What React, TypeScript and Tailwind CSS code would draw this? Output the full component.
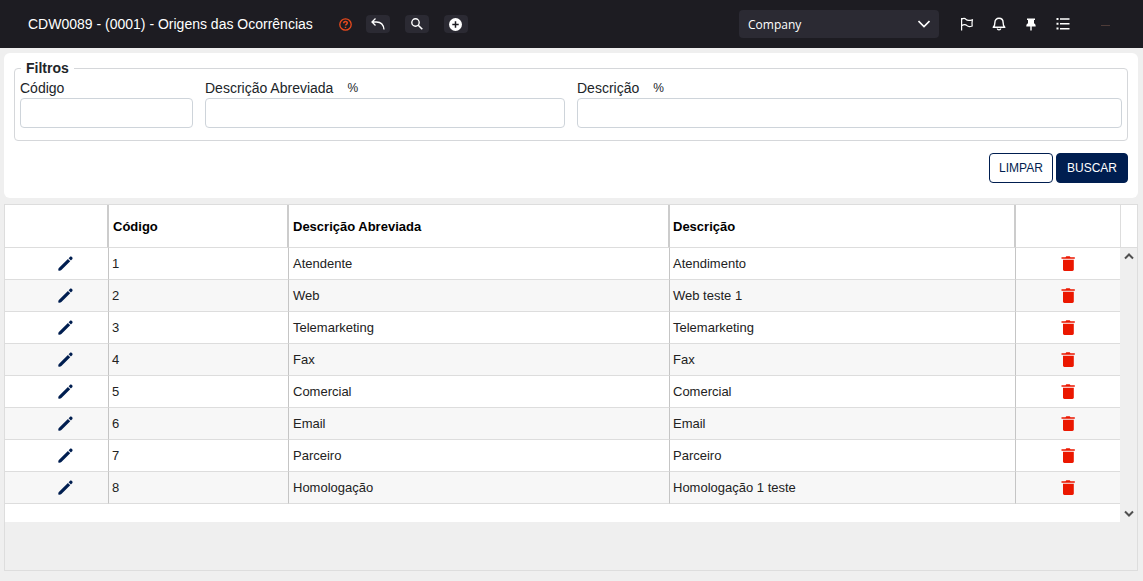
import { ReactNode } from 'react';

// Types
type Origin = {
    id: number,
    short: string,
    description: string,
};

const origins: Origin[] = [
    { id: 1, short: 'Atendente', description: 'Atendimento' },
    { id: 2, short: 'Web', description: 'Web teste 1' },
    { id: 3, short: 'Telemarketing', description: 'Telemarketing' },
    { id: 4, short: 'Fax', description: 'Fax' },
    { id: 5, short: 'Comercial', description: 'Comercial' },
    { id: 6, short: 'Email', description: 'Email' },
    { id: 7, short: 'Parceiro', description: 'Parceiro' },
    { id: 8, short: 'Homologação', description: 'Homologação 1 teste' },
];

const ToolButton = ({ label, children }: { label: string, children: ReactNode }) => (
    <button type="button" aria-label={label} className="flex h-[18px] w-6 items-center justify-center rounded-sm bg-[#2b2a33] text-white">
        {children}
    </button>
);

const PlainButton = ({ label, children }: { label: string, children: ReactNode }) => (
    <button type="button" aria-label={label} className="flex h-4 w-4 items-center justify-center text-white">
        {children}
    </button>
);

const Header = () => (
    <header className="flex h-12 items-center bg-[#1d1c22] pl-7 pr-[30px] text-white">
        <h1 className="text-[14px] leading-5">CDW0089 - (0001) - Origens das Ocorrências</h1>
        <button type="button" aria-label="Ajuda" className="ml-[26px] text-[#e8491d]">
            <svg width="13" height="13" viewBox="0 0 13 13" fill="none" stroke="currentColor" strokeWidth="1.3">
                <circle cx="6.5" cy="6.5" r="5.7" />
                <path d="M4.7 5.2C4.7 2.8 8.3 2.9 8.3 5c0 1.3-1.8 1.3-1.8 2.6M6.5 8.8v1.2" strokeWidth="1.5" />
            </svg>
        </button>
        <div className="ml-[14px] flex gap-[15px]">
            <ToolButton label="Voltar">
                <svg width="14" height="12" viewBox="0 0 14 12" fill="none" stroke="currentColor" strokeWidth="1.3">
                    <path d="M4.5 0.5L1 4l3.5 3.5M1 4h4.5c4.500 0 7 2.500 7.500 7.500" />
                </svg>
            </ToolButton>
            <ToolButton label="Pesquisar">
                <svg width="12" height="12" viewBox="0 0 12 12" fill="none" stroke="currentColor" strokeWidth="1.4">
                    <circle cx="4.5" cy="4.5" r="3.7" />
                    <path d="M7.2 7.2L11.3 11.3" strokeWidth="1.6" />
                </svg>
            </ToolButton>
            <ToolButton label="Adicionar">
                <svg width="13" height="13" viewBox="0 0 13 13">
                    <circle cx="6.5" cy="6.5" r="6.5" fill="#fff" />
                    <path d="M6.5 3.3v6.4M3.3 6.5h6.4" stroke="#1d1c22" strokeWidth="1.5" />
                </svg>
            </ToolButton>
        </div>
        <div className="relative ml-auto">
            <select aria-label="Empresa" className="block h-7 w-[200px] appearance-none rounded-sm bg-[#2b2a33] pl-[9px] pt-0.5 font-['Open_Sans',sans-serif] text-[12px] text-white">
                <option>Company</option>
            </select>
            <svg className="pointer-events-none absolute right-[9px] top-[10px]" width="12" height="8" viewBox="0 0 12 8" fill="none" stroke="#fff" strokeWidth="1.6">
                <path d="M0.5 1L6 6.5L11.5 1" />
            </svg>
        </div>
        <nav className="ml-5 flex items-center gap-4">
            <PlainButton label="Favoritos">
                <svg width="14" height="14" viewBox="0 0 14 14" fill="none" stroke="currentColor" strokeWidth="1.2">
                    <path d="M1.6 1v12.5M1.6 2.3C3.5 1 5 1.2 6 2.4s2.5 1.5 6.400.4l-.4 3.200.2 3c-2.500.9-4.200.7-5.200-.3S3.500 7.600 1.600 8.700" />
                </svg>
            </PlainButton>
            <PlainButton label="Notificações">
                <svg width="14" height="14" viewBox="0 0 14 14" fill="none" stroke="currentColor" strokeWidth="1.4">
                    <path d="M1.2 10.3c1.3-1 1.7-2 1.7-4.8C2.9 3 4.5 1.3 7 1.3s4.1 1.7 4.1 4.2c0 2.8.4 3.8 1.7 4.8z" strokeLinejoin="round" />
                    <path d="M5.3 11.5c.2 1.8 3.2 1.8 3.4 0" />
                </svg>
            </PlainButton>
            <PlainButton label="Fixar">
                <svg width="10" height="13" viewBox="0 0 10 13" fill="currentColor">
                    <path d="M1 0.5h8V2H8v3.2c1 .5 1.700 1.400 1.700 3.300H.3c0-1.900.7-2.800 1.700-3.300V2H1zM4.300 8h1.400v4l-.7 1-.7-1z" />
                </svg>
            </PlainButton>
            <PlainButton label="Menu">
                <svg width="14" height="12" viewBox="0 0 14 12" fill="currentColor">
                    <path d="M0.500 0h2v2h-2zM0.500 4.800h2v2h-2zM0.500 9.600h2v2h-2zM4 .3h9.500v1.500H4zM4 5.100h9.500v1.500H4zM4 9.900h9.500v1.500H4z" />
                </svg>
            </PlainButton>
        </nav>
        <button type="button" aria-label="Minimizar" className="ml-[26px] flex h-4 w-4 items-end justify-center pb-1.5">
            <span className="h-px w-[9px] bg-[#4d3b38]" />
        </button>
    </header>
);

const Field = ({ id, label, like, className }: { id: string, label: string, like?: boolean, className: string }) => (
    <div className={className}>
        <label htmlFor={id} className="flex h-5 items-center text-[14px] text-[#212529]">
            {label}
            {like && <span className="ml-[14px] text-[12px]">%</span>}
        </label>
        <input id={id} type="text" className="block h-[30px] w-full rounded border border-[#ced4da] bg-white px-2 text-[14px]" />
    </div>
);

const Filters = () => (
    <form className="rounded-md bg-white px-[10px] pb-[15px] pt-[5px]">
        <fieldset className="rounded border border-[#d5d7da] px-[5px] pb-3">
            <legend className="ml-px px-[5px] text-[14px] font-bold leading-5 text-[#212529]">Filtros</legend>
            <div className="flex gap-3">
                <Field id="codigo" label="Código" className="w-[173px]" />
                <Field id="abreviada" label="Descrição Abreviada" like className="flex-[360]" />
                <Field id="descricao" label="Descrição" like className="flex-[545]" />
            </div>
        </fieldset>
        <div className="mt-3 flex justify-end gap-[3px] text-[12px]">
            <button type="reset" className="h-[30px] w-16 rounded border border-[#001e50] bg-white text-[#001e50]">LIMPAR</button>
            <button type="button" className="h-[30px] w-[72px] rounded border border-[#001e50] bg-[#001e50] text-white">BUSCAR</button>
        </div>
    </form>
);

const Row = ({ id, short, description }: Origin) => (
    <tr className="h-8 even:bg-[#f7f7f7]">
        <td className="border-r border-r-[#c5c5c5]">
            <button type="button" aria-label={`Editar ${short}`} className="ml-[53px] block text-[#001e50]">
                <svg width="15" height="15" viewBox="0 0 15 15" fill="currentColor">
                    <path d="M0.400 14.600c-.3-1 0-2.200.7-2.900L9.900 2.900l2.300 2.300-8.800 8.800c-.7.7-2 1-3 .6zM10.600 2.200L11.900.9c.5-.5 1.400-.5 1.900 0l.4.4c.5.5.5 1.400 0 1.900L12.900 4.500z" />
                </svg>
            </button>
        </td>
        <td className="border-r border-r-[#c5c5c5] px-[3px]">{id}</td>
        <td className="border-r border-r-[#c5c5c5] px-1">{short}</td>
        <td className="border-r border-r-[#c5c5c5] px-[3px]">{description}</td>
        <td>
            <button type="button" aria-label={`Excluir ${short}`} className="mx-auto block text-[#eb1700]">
                <svg width="14" height="15" viewBox="0 0 14 15" fill="currentColor">
                    <path d="M0.500 1.200h4l.8-.9h3.400l.8.900h4.300v1.500H.5zM2 3.700h10.800v9.800c0 .8-.6 1.400-1.400 1.400H3.400c-.8 0-1.400-.6-1.400-1.400z" />
                </svg>
            </button>
        </td>
    </tr>
);

const Grid = () => (
    <section className="border border-[#dddddd] pb-12">
        <div className="flex">
            <div className="min-w-0 flex-1 bg-white pb-[18px]">
                <table className="w-full table-fixed border-separate border-spacing-0 text-left text-[13px] text-[#222222] [&_td]:border-b [&_td]:border-b-[#dddddd]">
                    <colgroup>
                        <col className="w-[104px]" />
                        <col className="w-[180px]" />
                        <col />
                        <col className="w-[346px]" />
                        <col className="w-[104px]" />
                    </colgroup>
                    <thead>
                        <tr className="h-[43px] text-black [&>th]:border-b [&>th]:border-b-[#dddddd] [&>th]:border-r-[#cccccc] [&>th]:pt-0.5 [&>th:not(:last-child)]:border-r-2">
                            <th aria-label="Editar" />
                            <th className="px-1">Código</th>
                            <th className="px-1">Descrição Abreviada</th>
                            <th className="px-[3px]">Descrição</th>
                            <th aria-label="Excluir" />
                        </tr>
                    </thead>
                    <tbody>
                        {origins.map((origin) => <Row key={origin.id} {...origin} />)}
                    </tbody>
                </table>
            </div>
            <div className="flex w-[17px] flex-col">
                <div className="h-[43px] border-b border-l border-[#dddddd] bg-white" />
                <div className="flex flex-1 flex-col items-center justify-between py-1 text-[#505050]">
                    <svg width="10" height="8" viewBox="0 0 10 8" fill="none" stroke="currentColor" strokeWidth="2">
                        <path d="M1 6.5l4-4 4 4" />
                    </svg>
                    <svg width="10" height="8" viewBox="0 0 10 8" fill="none" stroke="currentColor" strokeWidth="2">
                        <path d="M1 1.5l4 4 4-4" />
                    </svg>
                </div>
            </div>
        </div>
    </section>
);

const App = () => (
    <div className="min-h-screen bg-[#efefef] font-['Liberation_Sans',Arial,sans-serif]">
        <Header />
        <main className="flex flex-col gap-[6px] pb-[10px] pl-1 pr-[5px] pt-[5px]">
            <Filters />
            <Grid />
        </main>
    </div>
);

export default App;
